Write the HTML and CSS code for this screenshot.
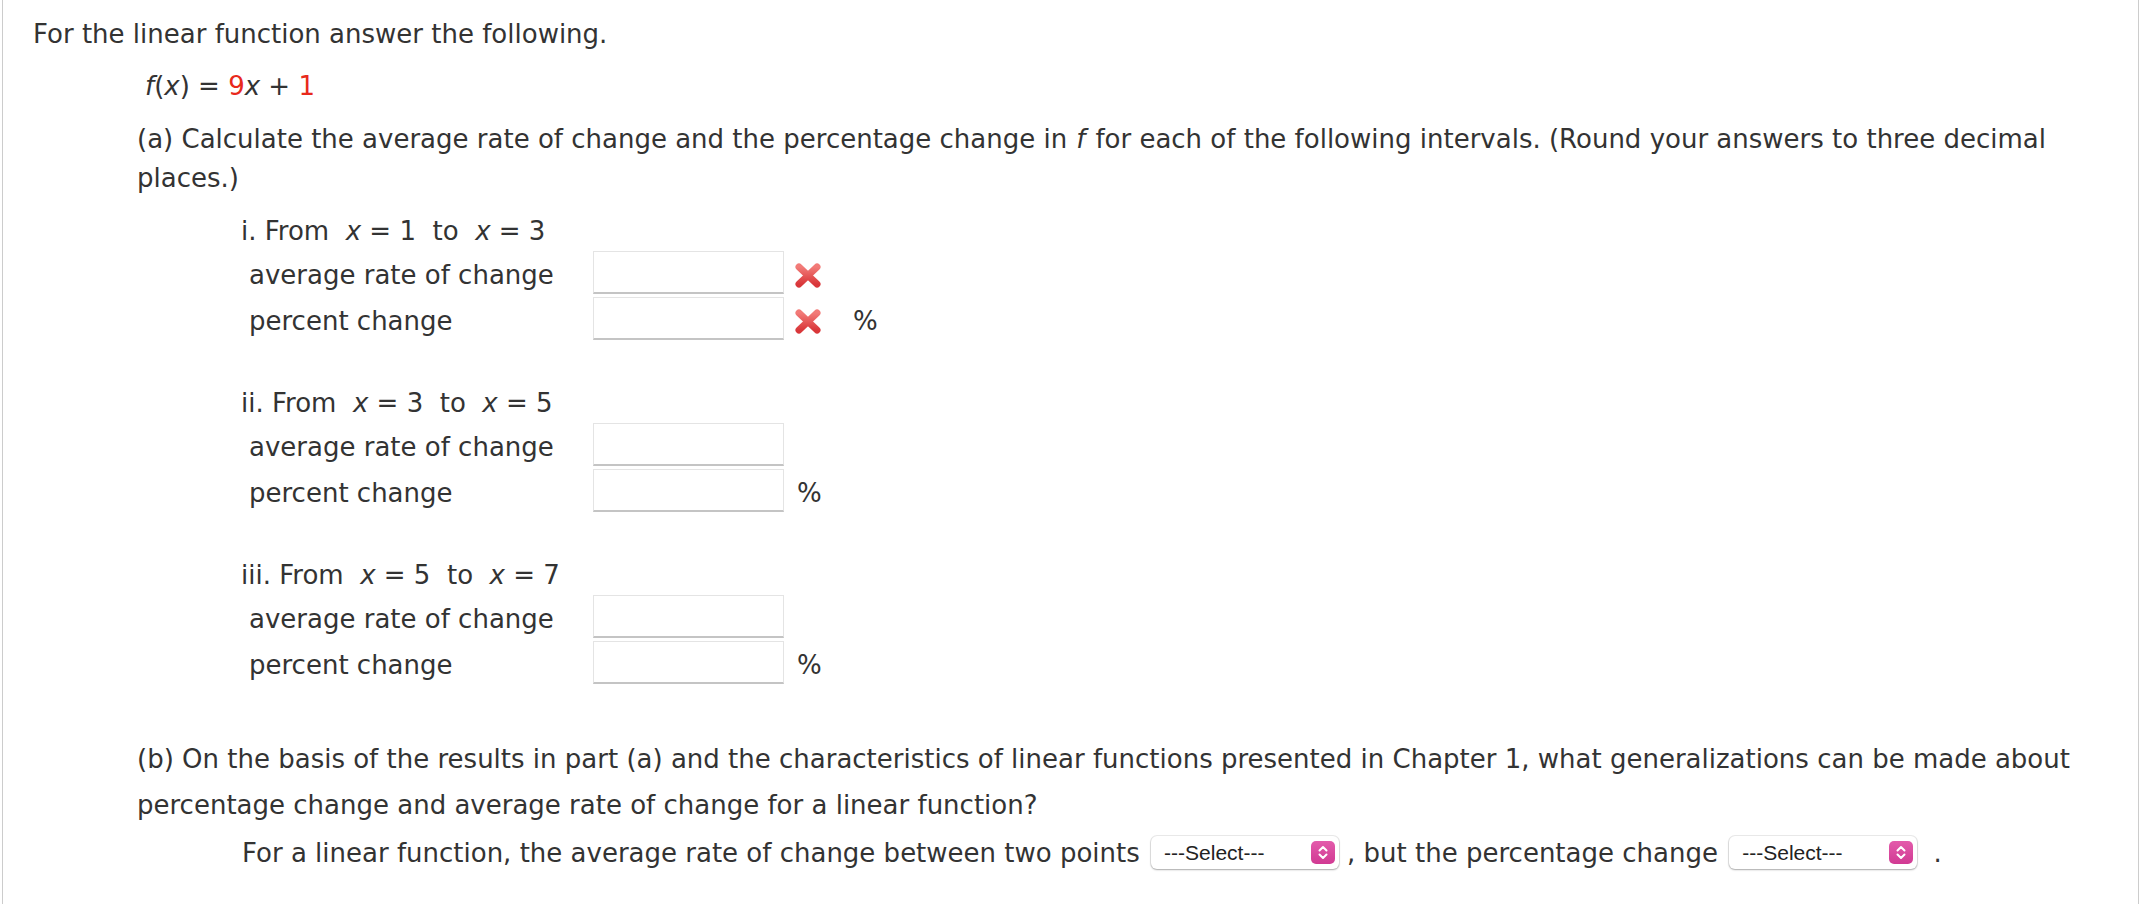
FILE: index.html
```html
<!DOCTYPE html>
<html lang="en">
<head>
<meta charset="utf-8">
<title>Linear function</title>
<link rel="stylesheet" href="styles.css">
</head>
<body>
<div class="sheet">
  <p class="intro">For the linear function answer the following.</p>
  <div class="body">
    <p class="func"><i>f</i>(<i>x</i>) = <span class="red">9</span><i>x</i> + <span class="red">1</span></p>
    <p class="q">(a) Calculate the average rate of change and the percentage change in<i class="fi">f</i>for each of the following intervals. (Round your answers to three decimal places.)</p>

    <div class="interval">
      <div class="head">i. From&nbsp; <i>x</i> = 1&nbsp; to&nbsp; <i>x</i> = 3</div>
      <div class="row">
        <span class="label">average rate of change</span>
        <span class="input"></span>
        <svg class="mark" width="28" height="27" viewBox="0 0 28 27"><defs><linearGradient id="g1" x1="0" y1="0" x2="0" y2="1"><stop offset="0" stop-color="#f27b78"/><stop offset="1" stop-color="#d9373a"/></linearGradient></defs><path d="M5 5 L23 22 M23 5 L5 22" stroke="url(#g1)" stroke-width="7" stroke-linecap="round"/></svg>
      </div>
      <div class="row">
        <span class="label">percent change</span>
        <span class="input"></span>
        <svg class="mark" width="28" height="27" viewBox="0 0 28 27"><defs><linearGradient id="g2" x1="0" y1="0" x2="0" y2="1"><stop offset="0" stop-color="#f27b78"/><stop offset="1" stop-color="#d9373a"/></linearGradient></defs><path d="M5 5 L23 22 M23 5 L5 22" stroke="url(#g2)" stroke-width="7" stroke-linecap="round"/></svg>
        <span class="unit after-mark">%</span>
      </div>
    </div>

    <div class="interval">
      <div class="head">ii. From&nbsp; <i>x</i> = 3&nbsp; to&nbsp; <i>x</i> = 5</div>
      <div class="row">
        <span class="label">average rate of change</span>
        <span class="input"></span>
      </div>
      <div class="row">
        <span class="label">percent change</span>
        <span class="input"></span>
        <span class="unit">%</span>
      </div>
    </div>

    <div class="interval last">
      <div class="head">iii. From&nbsp; <i>x</i> = 5&nbsp; to&nbsp; <i>x</i> = 7</div>
      <div class="row">
        <span class="label">average rate of change</span>
        <span class="input"></span>
      </div>
      <div class="row">
        <span class="label">percent change</span>
        <span class="input"></span>
        <span class="unit">%</span>
      </div>
    </div>

    <p class="qb">(b) On the basis of the results in part (a) and the characteristics of linear functions presented in Chapter 1, what generalizations can be made about percentage change and average rate of change for a linear function?</p>
    <p class="answer">For a linear function, the average rate of change between two points <span class="select"><span class="sel-text">---Select---</span><svg class="sel-btn" width="24" height="23" viewBox="0 0 24 23"><defs><linearGradient id="p1" x1="0" y1="0" x2="0" y2="1"><stop offset="0" stop-color="#e35bab"/><stop offset="1" stop-color="#d13a93"/></linearGradient></defs><rect x="0" y="0" width="24" height="23" rx="5" fill="url(#p1)"/><path d="M8.5 9.5 L12 6 L15.5 9.5 M8.5 13.5 L12 17 L15.5 13.5" fill="none" stroke="#fff" stroke-width="2" stroke-linecap="round" stroke-linejoin="round"/></svg></span>, but the percentage change <span class="select"><span class="sel-text">---Select---</span><svg class="sel-btn" width="24" height="23" viewBox="0 0 24 23"><defs><linearGradient id="p2" x1="0" y1="0" x2="0" y2="1"><stop offset="0" stop-color="#e35bab"/><stop offset="1" stop-color="#d13a93"/></linearGradient></defs><rect x="0" y="0" width="24" height="23" rx="5" fill="url(#p2)"/><path d="M8.5 9.5 L12 6 L15.5 9.5 M8.5 13.5 L12 17 L15.5 13.5" fill="none" stroke="#fff" stroke-width="2" stroke-linecap="round" stroke-linejoin="round"/></svg></span> .</p>
  </div>
</div>
</body>
</html>
```

FILE: styles.css
```css
html, body {
  margin: 0;
  padding: 0;
  background: #ffffff;
}

body {
  font-family: "DejaVu Sans", Verdana, sans-serif;
  font-size: 26px;
  color: #333333;
  line-height: 39px;
}

.sheet {
  margin-left: 2px;
  width: 2137px;
  height: 904px;
  overflow: hidden;
  border-left: 1px solid #cccccc;
  border-right: 1px solid #cccccc;
  padding: 15px 0 0 30px;
  box-sizing: border-box;
}

.intro {
  margin: 0 0 13px;
}

.body {
  padding-left: 104px;
  padding-right: 40px;
}

.func {
  margin: 0 0 14px;
  padding-left: 8px;
}

.red {
  color: #e8291c;
}

.fi {
  display: inline-block;
  margin: 0 10px 0 9px;
}

.q {
  margin: 0 0 14px;
}

.interval {
  padding-left: 104px;
  margin-bottom: 41px;
}

.interval.last {
  margin-bottom: 0;
}

.head {
  height: 39px;
}

.row {
  display: flex;
  align-items: center;
  height: 46px;
  padding-left: 8px;
}

.label {
  width: 344px;
  padding-top: 3px;
  flex: none;
}

.input {
  display: block;
  flex: none;
  width: 191px;
  height: 43px;
  box-sizing: border-box;
  border: 1px solid #e4e4e4;
  border-bottom: 2px solid #c4c4c4;
  background: #ffffff;
  margin-bottom: 3px;
}

.mark {
  flex: none;
  margin-left: 10px;
  margin-top: 2px;
}

.unit {
  margin-left: 13px;
  padding-top: 3px;
}

.unit.after-mark {
  margin-left: 31px;
}

.qb {
  margin: 49px 0 2px;
  line-height: 46px;
}

.answer {
  margin: 0;
  padding-left: 105px;
  line-height: 46px;
}

.select {
  display: inline-flex;
  align-items: center;
  justify-content: space-between;
  vertical-align: middle;
  width: 188px;
  height: 33px;
  box-sizing: border-box;
  padding: 0 4px 0 13px;
  margin: 0 8px 0 3px;
  border-radius: 6px;
  background: #ffffff;
  box-shadow: 0 0 0 1px rgba(0, 0, 0, 0.08), 0 1px 2px rgba(0, 0, 0, 0.28);
  font-family: "Liberation Sans", Arial, sans-serif;
  font-size: 21px;
  line-height: 33px;
  color: #222222;
  position: relative;
  top: -2px;
}

.sel-btn {
  display: block;
  flex: none;
}
```
